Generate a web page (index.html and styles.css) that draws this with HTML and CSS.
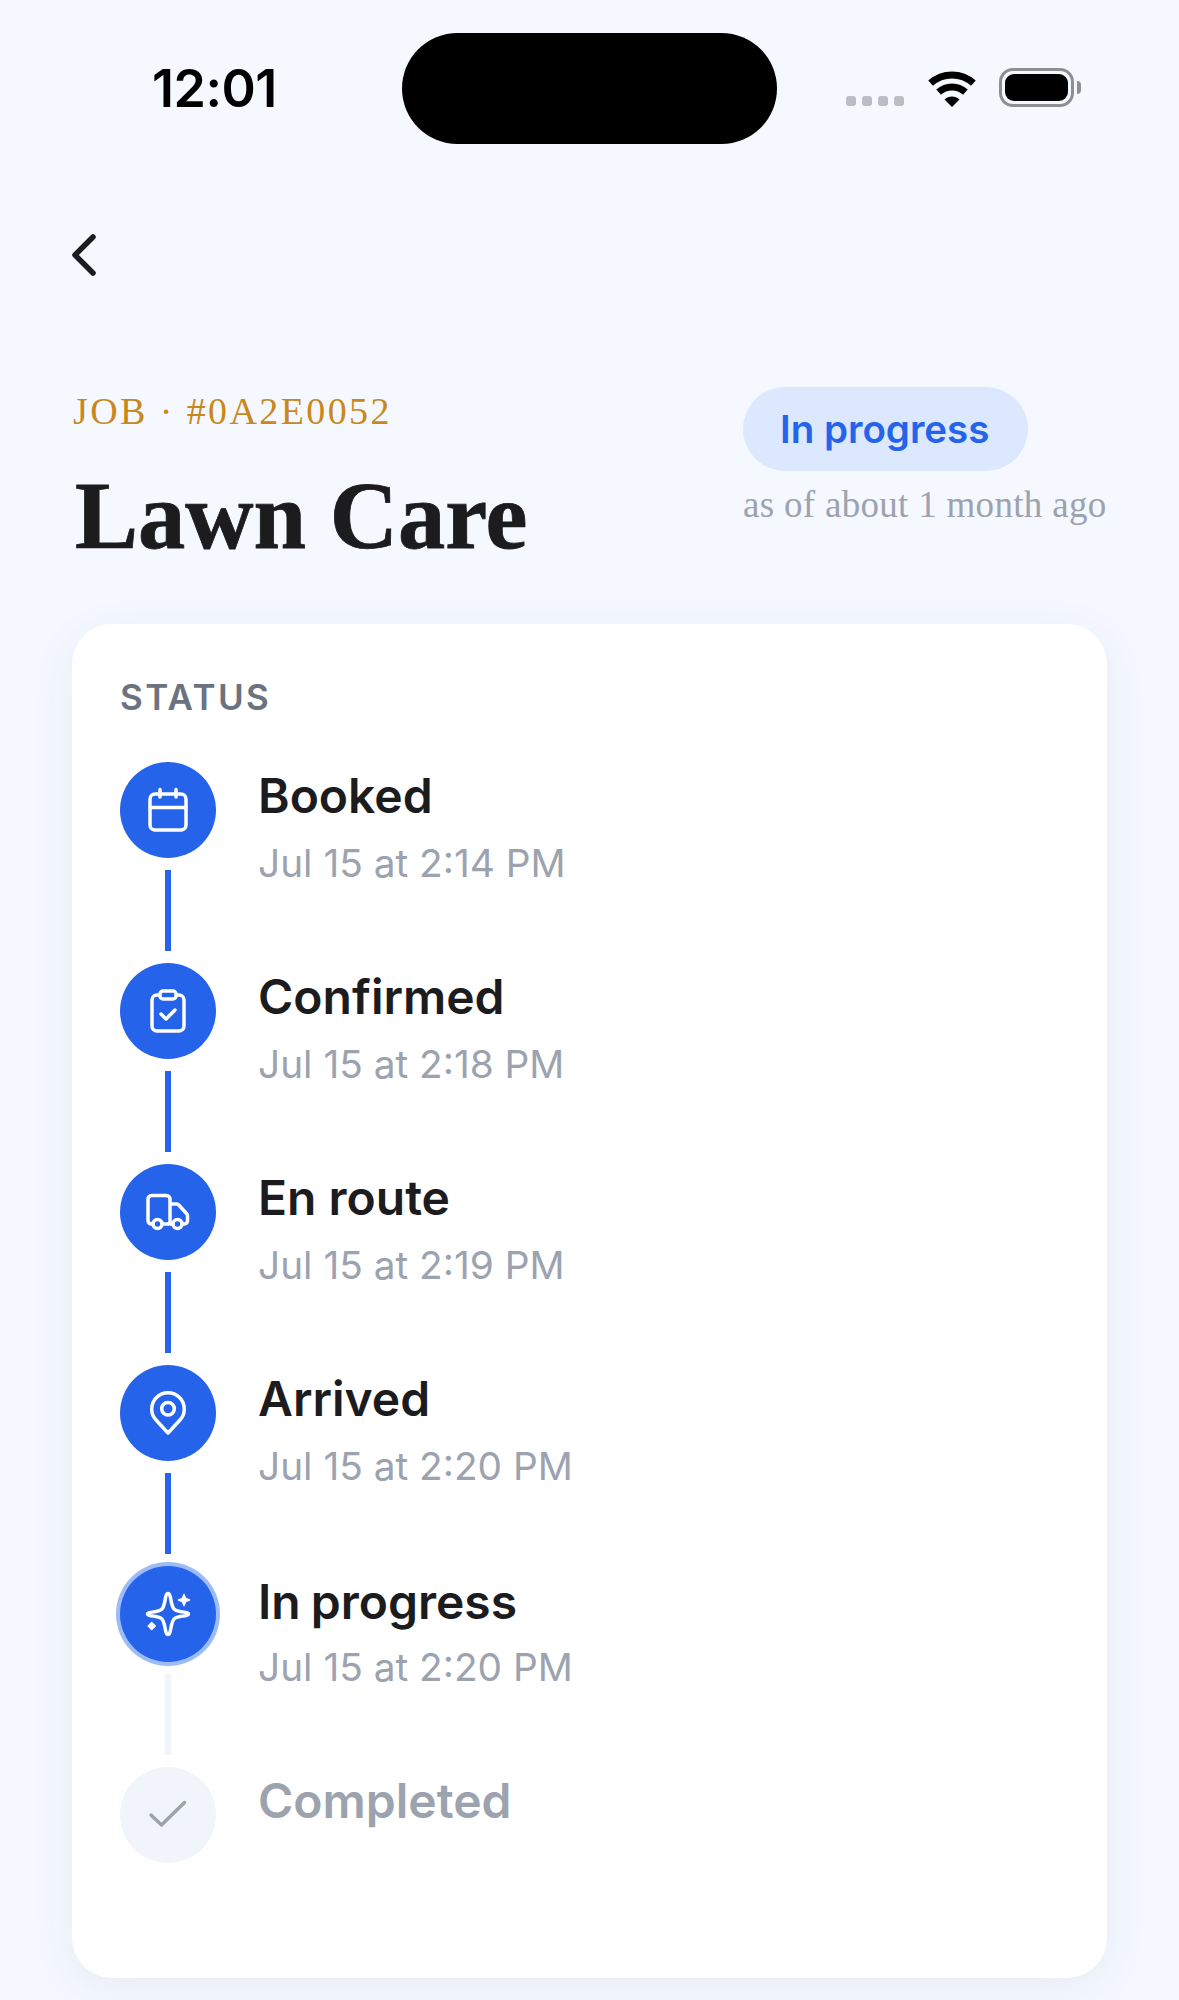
FILE: index.html
```html
<!DOCTYPE html>
<html lang="en">
<head>
<meta charset="utf-8">
<title>Lawn Care</title>
<link rel="stylesheet" href="styles.css">
</head>
<body>
<main class="screen">
  <header class="statusbar">
    <span class="clock">12:01</span>
    <span class="island"></span>
    <div class="indicators">
      <span class="signal"><i></i><i></i><i></i><i></i></span>
      <svg class="wifi" viewBox="0 0 52 38" width="52" height="38">
        <path class="wifi-arc" d="M4.6 14.2A32 32 0 0 1 47.4 14.2"/>
        <path class="wifi-arc" d="M12.6 23.1A20 20 0 0 1 39.4 23.1"/>
        <path class="wifi-dot" d="M26 38L18.5 30.5A10.6 10.6 0 0 1 33.5 30.5Z"/>
      </svg>
      <span class="battery"><span class="battery-level"></span></span>
      <span class="battery-cap"></span>
    </div>
  </header>

  <nav class="backrow">
    <svg class="back" viewBox="0 0 28 46" width="28" height="46">
      <path d="M22 5L4 23L22 41"/>
    </svg>
  </nav>

  <section class="heading">
    <div>
      <p class="jobref">JOB · #0A2E0052</p>
      <h1 class="title">Lawn Care</h1>
    </div>
    <div class="state">
      <span class="pill">In progress</span>
      <p class="asof">as of about 1 month ago</p>
    </div>
  </section>

  <section class="card">
    <h2 class="card-label">STATUS</h2>
    <ol class="timeline">
      <li class="step">
        <div class="rail">
          <span class="dot">
            <svg class="glyph" viewBox="0 0 96 96">
              <rect x="30" y="32" width="36" height="36" rx="5"/>
              <path d="M30 45.5H66M40 27.5V35M56 27.5V35"/>
            </svg>
          </span>
          <span class="link"></span>
        </div>
        <div class="step-text">
          <div class="step-name">Booked</div>
          <div class="step-time">Jul 15 at 2:14 PM</div>
        </div>
      </li>
      <li class="step">
        <div class="rail">
          <span class="dot">
            <svg class="glyph" viewBox="0 0 96 96">
              <rect x="32" y="32" width="32" height="36" rx="5"/>
              <rect class="clip" x="40" y="28" width="16" height="8" rx="3"/>
              <path d="M41 51L46 56L55 47"/>
            </svg>
          </span>
          <span class="link"></span>
        </div>
        <div class="step-text">
          <div class="step-name">Confirmed</div>
          <div class="step-time">Jul 15 at 2:18 PM</div>
        </div>
      </li>
      <li class="step">
        <div class="rail">
          <span class="dot">
            <svg class="glyph" viewBox="0 0 96 96">
              <path d="M33 60H31.500A3.500 3.500 0 0 1 28 56.500V35A3.500 3.500 0 0 1 31.500 31.500H46.500A3.500 3.500 0 0 1 50 35V60M42 60H53M50 40H56.500A3 3 0 0 1 58.800 41L66.500 49.500A3 3 0 0 1 67.500 51.500V57A3 3 0 0 1 64.500 60H62"/>
              <circle cx="37.500" cy="60" r="4.500"/>
              <circle cx="57.500" cy="60" r="4.500"/>
            </svg>
          </span>
          <span class="link"></span>
        </div>
        <div class="step-text">
          <div class="step-name">En route</div>
          <div class="step-time">Jul 15 at 2:19 PM</div>
        </div>
      </li>
      <li class="step">
        <div class="rail">
          <span class="dot">
            <svg class="glyph" viewBox="0 0 96 96">
              <path d="M48 68L36.500 55.500A16.300 16.300 0 1 1 59.500 55.500Z"/>
              <circle cx="48" cy="43.700" r="6.300"/>
            </svg>
          </span>
          <span class="link"></span>
        </div>
        <div class="step-text">
          <div class="step-name">Arrived</div>
          <div class="step-time">Jul 15 at 2:20 PM</div>
        </div>
      </li>
      <li class="step">
        <div class="rail">
          <span class="dot dot-current">
            <svg class="glyph" viewBox="0 0 96 96">
              <path d="M48 27.500C50 27.500 50.500 32 51.500 37C53 43 54 44.500 60 45.500C65 46.300 68.500 46.500 68.500 48C68.500 49.500 65 49.700 60 50.500C54 51.500 53 53 51.500 59C50.500 64 50 68.500 48 68.500C46 68.500 45.500 64 44.500 59C43 53 42 51.500 36 50.500C31 49.700 27.500 49.500 27.500 48C27.500 46.500 31 46.300 36 45.500C42 44.500 43 43 44.500 37C45.500 32 46 27.500 48 27.500Z"/>
              <path class="spark" d="M64 28.500L65.500 32.500L69.500 34L65.500 35.500L64 39.500L62.500 35.500L58.500 34L62.500 32.500Z"/>
              <path class="spark" d="M31.700 56.500L35.200 60L31.700 63.500L28.200 60Z"/>
            </svg>
          </span>
          <span class="link link-pending"></span>
        </div>
        <div class="step-text">
          <div class="step-name step-name-current">In progress</div>
          <div class="step-time">Jul 15 at 2:20 PM</div>
        </div>
      </li>
      <li class="step">
        <div class="rail">
          <span class="dot dot-pending">
            <svg class="glyph glyph-pending" viewBox="0 0 96 96">
              <path d="M31 48L41.500 58L64.500 35.500"/>
            </svg>
          </span>
        </div>
        <div class="step-text">
          <div class="step-name step-name-pending">Completed</div>
        </div>
      </li>
    </ol>
  </section>
</main>
</body>
</html>
```
FILE: styles.css
```css
* { box-sizing: border-box; }

html, body {
  margin: 0;
  padding: 0;
  background: #f5f8ff;
}

.screen {
  width: 1179px;
  height: 2000px;
  overflow: hidden;
  background: #f5f8ff;
  font-family: Inter, "Liberation Sans", sans-serif;
  color: #1c1c1e;
}

/* Status bar */
.statusbar {
  display: flex;
  align-items: flex-start;
  height: 144px;
  padding: 33px 0 0 152px;
}

.clock {
  width: 250px;
  margin-top: 24px;
  font-size: 52px;
  font-weight: 600;
  line-height: 63px;
  letter-spacing: -0.5px;
  color: #000;
}

.island {
  width: 375px;
  height: 111px;
  border-radius: 56px;
  background: #000;
}

.indicators {
  display: flex;
  align-items: flex-start;
  margin-top: 35px;
  margin-left: 69px;
}

.signal {
  display: flex;
  gap: 6px;
  margin-top: 28px;
}

.signal i {
  width: 10px;
  height: 10px;
  border-radius: 3px;
  background: #bcbdc0;
}

.wifi { margin-left: 22px; margin-top: 1px; }
.wifi-arc { fill: none; stroke: #000; stroke-width: 7; }
.wifi-dot { fill: #000; }

.battery {
  display: block;
  width: 75px;
  height: 39px;
  margin-left: 21px;
  padding: 3px;
  border: 3px solid #8e8e93;
  border-radius: 14px;
}

.battery-level {
  display: block;
  height: 100%;
  border-radius: 9px;
  background: #000;
}

.battery-cap {
  width: 4px;
  height: 13px;
  margin: 13px 0 0 3px;
  border-radius: 0 4px 4px 0;
  background: #8e8e93;
}

/* Back control */
.backrow {
  height: 243px;
  padding: 88px 0 0 71px;
}

.back path {
  fill: none;
  stroke: #1c1c1e;
  stroke-width: 5.5;
  stroke-linecap: round;
  stroke-linejoin: round;
}

/* Title block */
.heading {
  display: flex;
  justify-content: space-between;
  height: 237px;
  padding: 0 73px;
}

.jobref {
  margin: 4px 0 0;
  font-family: "Liberation Serif", serif;
  font-size: 38px;
  line-height: 40px;
  letter-spacing: 2.4px;
  color: #c9881c;
}

.title {
  margin: 33px 0 0 2px;
  font-family: "Liberation Serif", serif;
  font-size: 94.5px;
  font-weight: 700;
  line-height: 104px;
  color: #1c1c1e;
  -webkit-text-stroke: 0.8px #1c1c1e;
}

.state {
  width: 363px;
}

.pill {
  display: inline-block;
  height: 84px;
  padding: 0 39px 0 37px;
  border-radius: 42px;
  background: #dbe8fe;
  color: #2563eb;
  font-size: 38.5px;
  font-weight: 600;
  line-height: 84px;
}

.asof {
  margin: 12px 0 0;
  font-family: "Liberation Serif", serif;
  font-size: 37px;
  line-height: 44px;
  letter-spacing: 0.3px;
  white-space: nowrap;
  color: #9ca3af;
}

/* Status card */
.card {
  height: 1354px;
  margin: 0 72px;
  padding: 53px 48px 0;
  border-radius: 40px;
  background: #fff;
  box-shadow: 0 10px 44px rgba(40, 70, 130, 0.07);
}

.card-label {
  margin: 0;
  font-size: 35px;
  font-weight: 600;
  line-height: 40px;
  letter-spacing: 2.4px;
  color: #6b7280;
}

.timeline {
  list-style: none;
  margin: 45px 0 0;
  padding: 0;
}

.step {
  display: flex;
  gap: 42px;
  height: 201px;
}

.rail {
  display: flex;
  flex-direction: column;
  align-items: center;
  width: 96px;
}

.dot {
  display: block;
  width: 96px;
  height: 96px;
  flex: none;
  border-radius: 50%;
  background: #2563eb;
}

.dot-current { box-shadow: 0 0 0 4px #9dbcf7; }
.dot-pending { background: #f1f4fa; }

.glyph {
  display: block;
  width: 96px;
  height: 96px;
  fill: none;
  stroke: #fff;
  stroke-width: 3.5;
  stroke-linecap: round;
  stroke-linejoin: round;
}

.glyph-pending { stroke: #9ca3af; }
.clip { fill: #2563eb; }
.spark { fill: #fff; stroke-width: 1.500; }

.link {
  width: 6px;
  height: 81px;
  margin-top: 12px;
  background: #2563eb;
}

.link-pending { background: #f1f4fa; }

.step-text {
  padding-top: 5px;
}

.step-name {
  font-size: 48px;
  font-weight: 600;
  line-height: 58px;
  color: #1c1c1e;
}

.step-name-current {
  margin: 2px 0 -2px;
  word-spacing: -2px;
}

.step-name-pending { color: #9ca3af; }

.step-time {
  margin-top: 15px;
  font-size: 38.8px;
  line-height: 46px;
  color: #9ca3af;
}
```
